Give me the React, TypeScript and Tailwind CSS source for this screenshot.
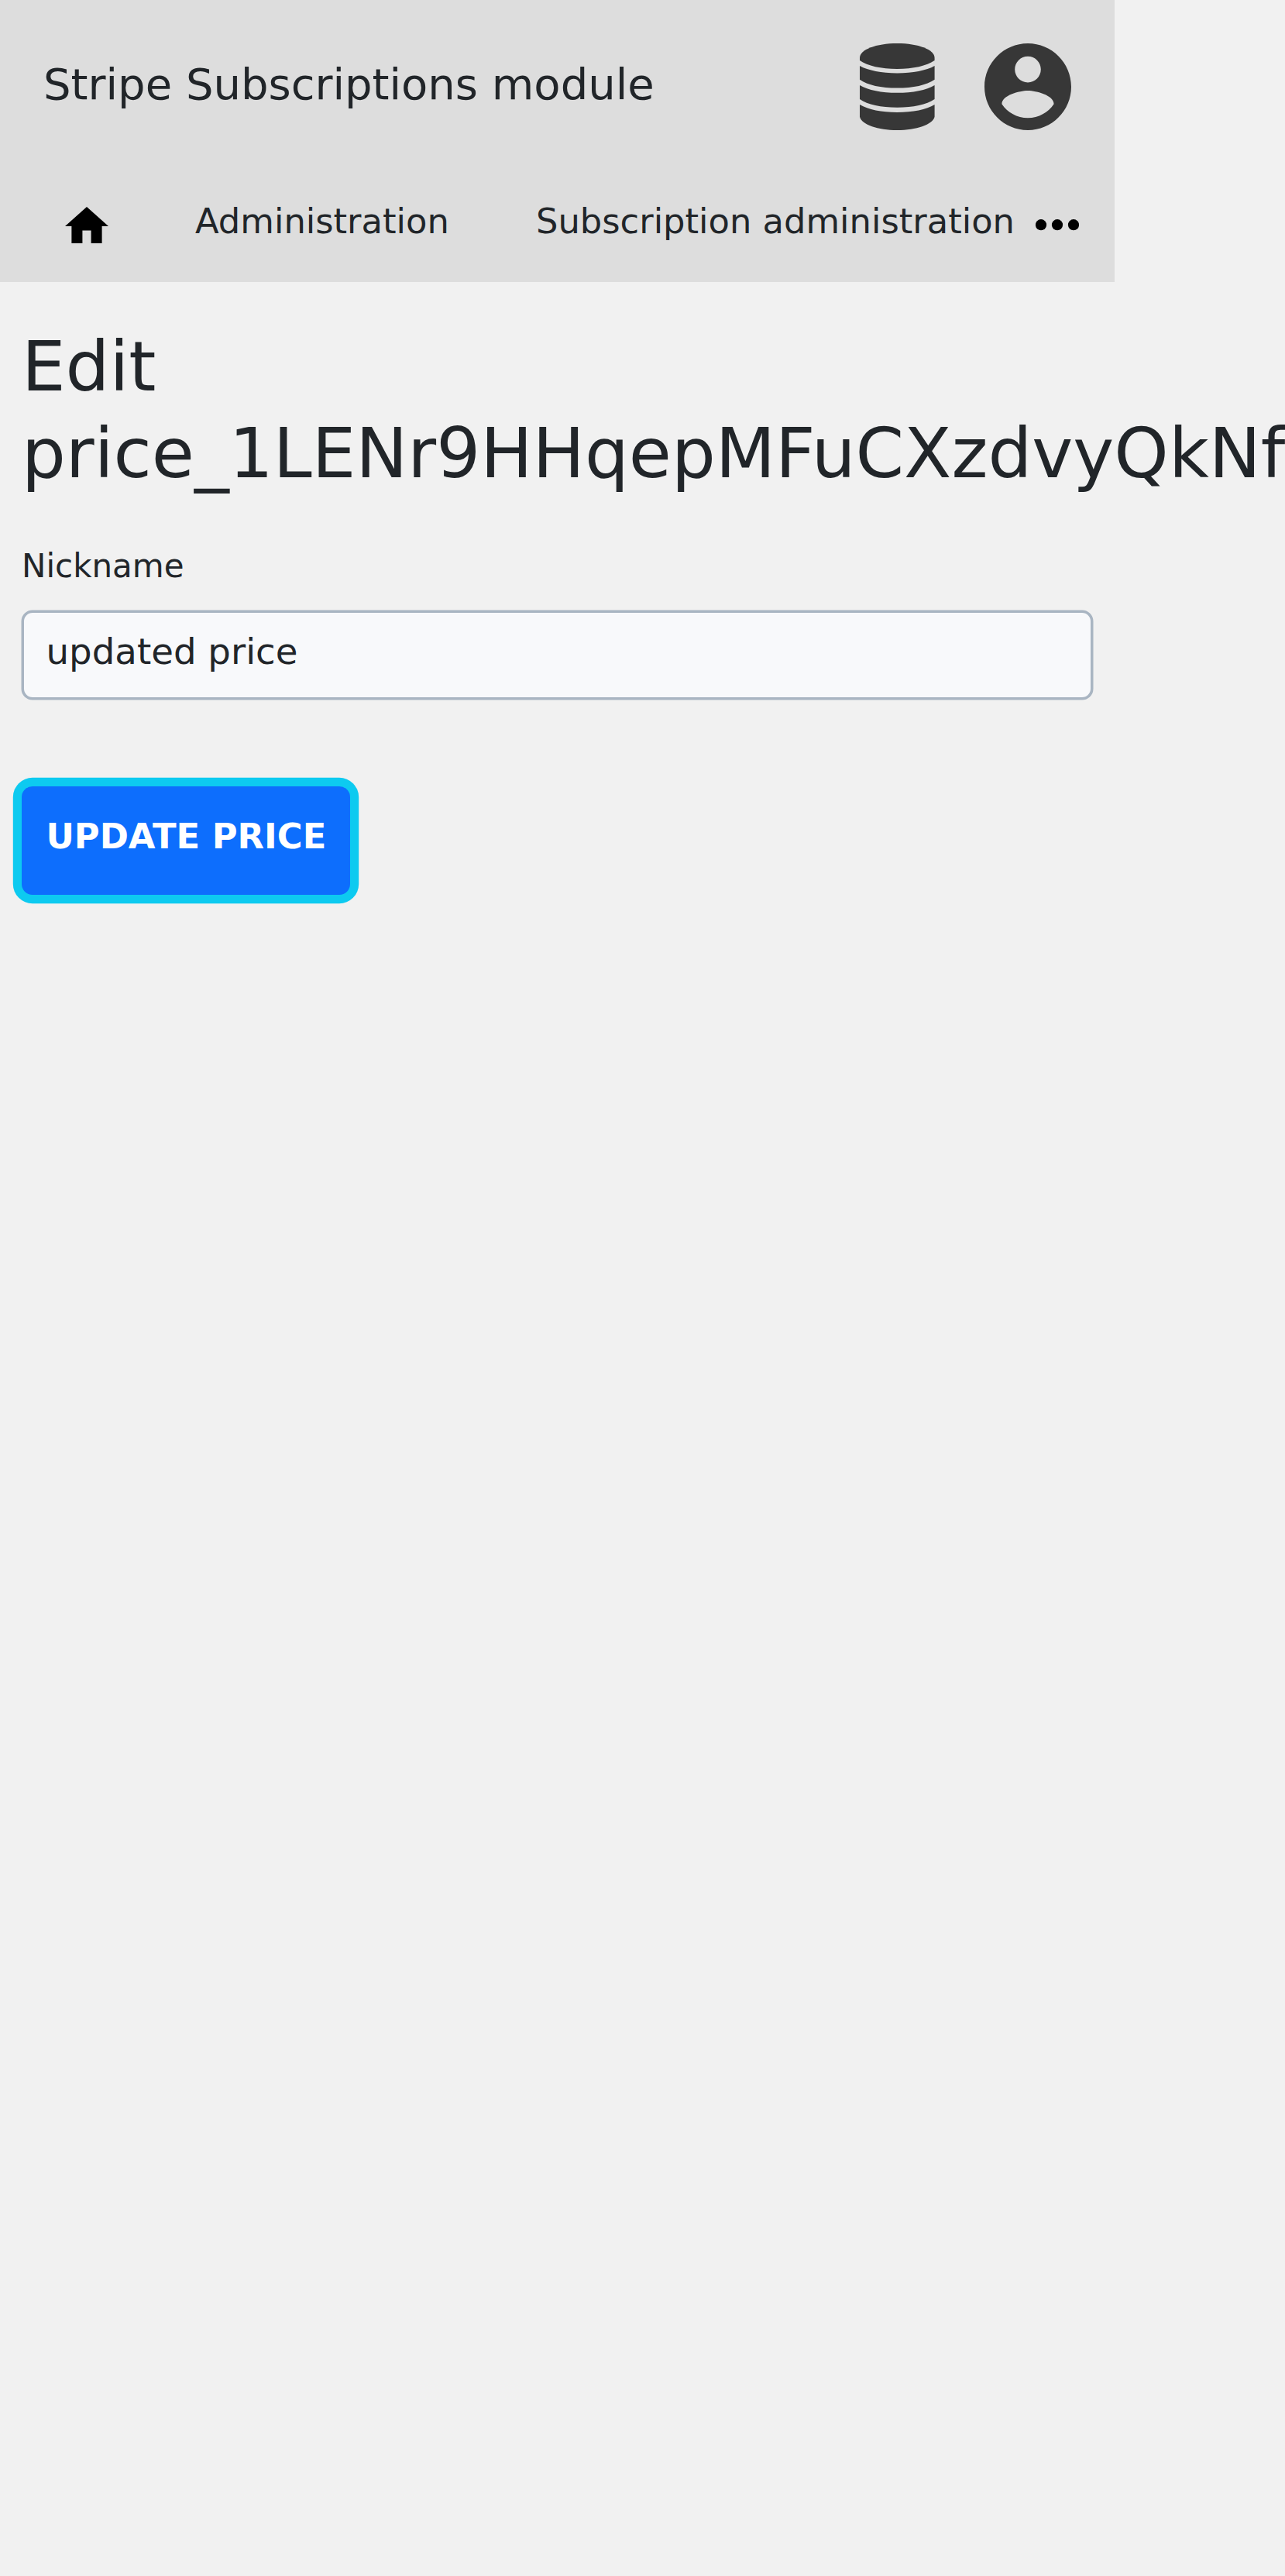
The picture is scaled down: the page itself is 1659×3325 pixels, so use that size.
function DatabaseIcon() {
  return (
    <svg className="mr-[64px] h-[112px] w-[96.6px]" viewBox="0 0 96.6 112" fill="#373737">
      <path d="M0 18.7C0 8 21 0 48.3 0S96.6 8 96.6 18.7V22C86 29 69 33 48.3 33S10 29 0 22Z" />
      <path d="M0 29C11 35 28 38.4 48.3 38.4S86 35 96.6 29V46.7C86 54 69 57.5 48.3 57.5S10 54 0 46.7Z" />
      <path d="M0 54C11 60.5 28 63.8 48.3 63.8S86 60.5 96.6 54V72C86 79 69 82.8 48.3 82.8S10 79 0 72Z" />
      <path d="M0 79C11 85.5 28 88.9 48.3 88.9S86 85.5 96.6 79V94.7C94 105 73 112 48.3 112S2.6 105 0 94.7Z" />
    </svg>
  );
}

function AccountIcon() {
  return (
    <svg className="h-[112px] w-[112px]" viewBox="2 2 20 20" fill="#373737">
      <path d="M12 2C6.48 2 2 6.48 2 12s4.48 10 10 10 10-4.48 10-10S17.52 2 12 2zm0 3c1.66 0 3 1.34 3 3s-1.34 3-3 3-3-1.34-3-3 1.34-3 3-3zm0 14.2c-2.5 0-4.71-1.28-6-3.22.03-1.99 4-3.08 6-3.08 1.99 0 5.97 1.09 6 3.08-1.29 1.94-3.5 3.22-6 3.22z" />
    </svg>
  );
}

function Header() {
  return (
    <header className="h-[364px] w-[1438.6px] bg-[#dddddd]">
      <div className="flex h-[252px] items-start pt-[56px] pl-[56px]">
        <h1 className="mt-[11px] w-[1054px] text-[56px] leading-[84px] whitespace-nowrap">Stripe Subscriptions module</h1>
        <DatabaseIcon />
        <AccountIcon />
      </div>
      <nav className="flex items-start text-[44.8px] leading-[67px] whitespace-nowrap">
        <svg className="mt-[15px] ml-[84px] h-[47px] w-[56px]" viewBox="0 0 56 47" fill="#000">
          <path d="M28 0L56 25H47.6V47H33.6V30.5H22.4V47H8.4V25H0Z" />
        </svg>
        <span className="ml-[112px] w-[440px]">Administration</span>
        <span className="w-[645px]">Subscription administration</span>
        <svg className="mt-[31px] h-[14.5px] w-[56px]" viewBox="0 0 56 14.5" fill="#000">
          <circle cx="7" cy="7.2" r="7.1" />
          <circle cx="28" cy="7.2" r="7.1" />
          <circle cx="49" cy="7.2" r="7.1" />
        </svg>
      </nav>
    </header>
  );
}

export default function App() {
  return (
    <div className="h-[3325px] w-[1659px] overflow-hidden bg-[#f1f1f1] font-['DejaVu_Sans',sans-serif] text-[#212529]">
      <Header />
      <main className="flex w-[1438.6px] flex-col items-start px-[28px] pt-[53px]">
        <h2 className="w-full text-[89.6px] leading-[112px]">Edit price_1LENr9HHqepMFuCXzdvyQkNf</h2>
        <label htmlFor="nickname" className="mt-[58px] text-[42px] leading-[63px]">Nickname</label>
        <input
          id="nickname"
          className="mt-[26px] h-[115px] w-full rounded-[14px] border-[3px] border-[#a9b5c2] bg-[#f8f9fb] pt-[16px] pr-[28px] pb-[26px] pl-[28.5px] text-[46.67px] leading-[67px] shadow-[0_0_0_0.5px_#a9b5c2] outline-none"
          defaultValue="updated price"
        />
        <button className="mt-[112px] h-[140px] w-[423.7px] rounded-[14px] bg-[#0d6efd] pb-[11px] pl-[1px] text-[44.8px] leading-[67px] font-bold whitespace-nowrap text-white uppercase ring-[11.2px] ring-[#0dcaf0]">
          Update price
        </button>
      </main>
    </div>
  );
}
